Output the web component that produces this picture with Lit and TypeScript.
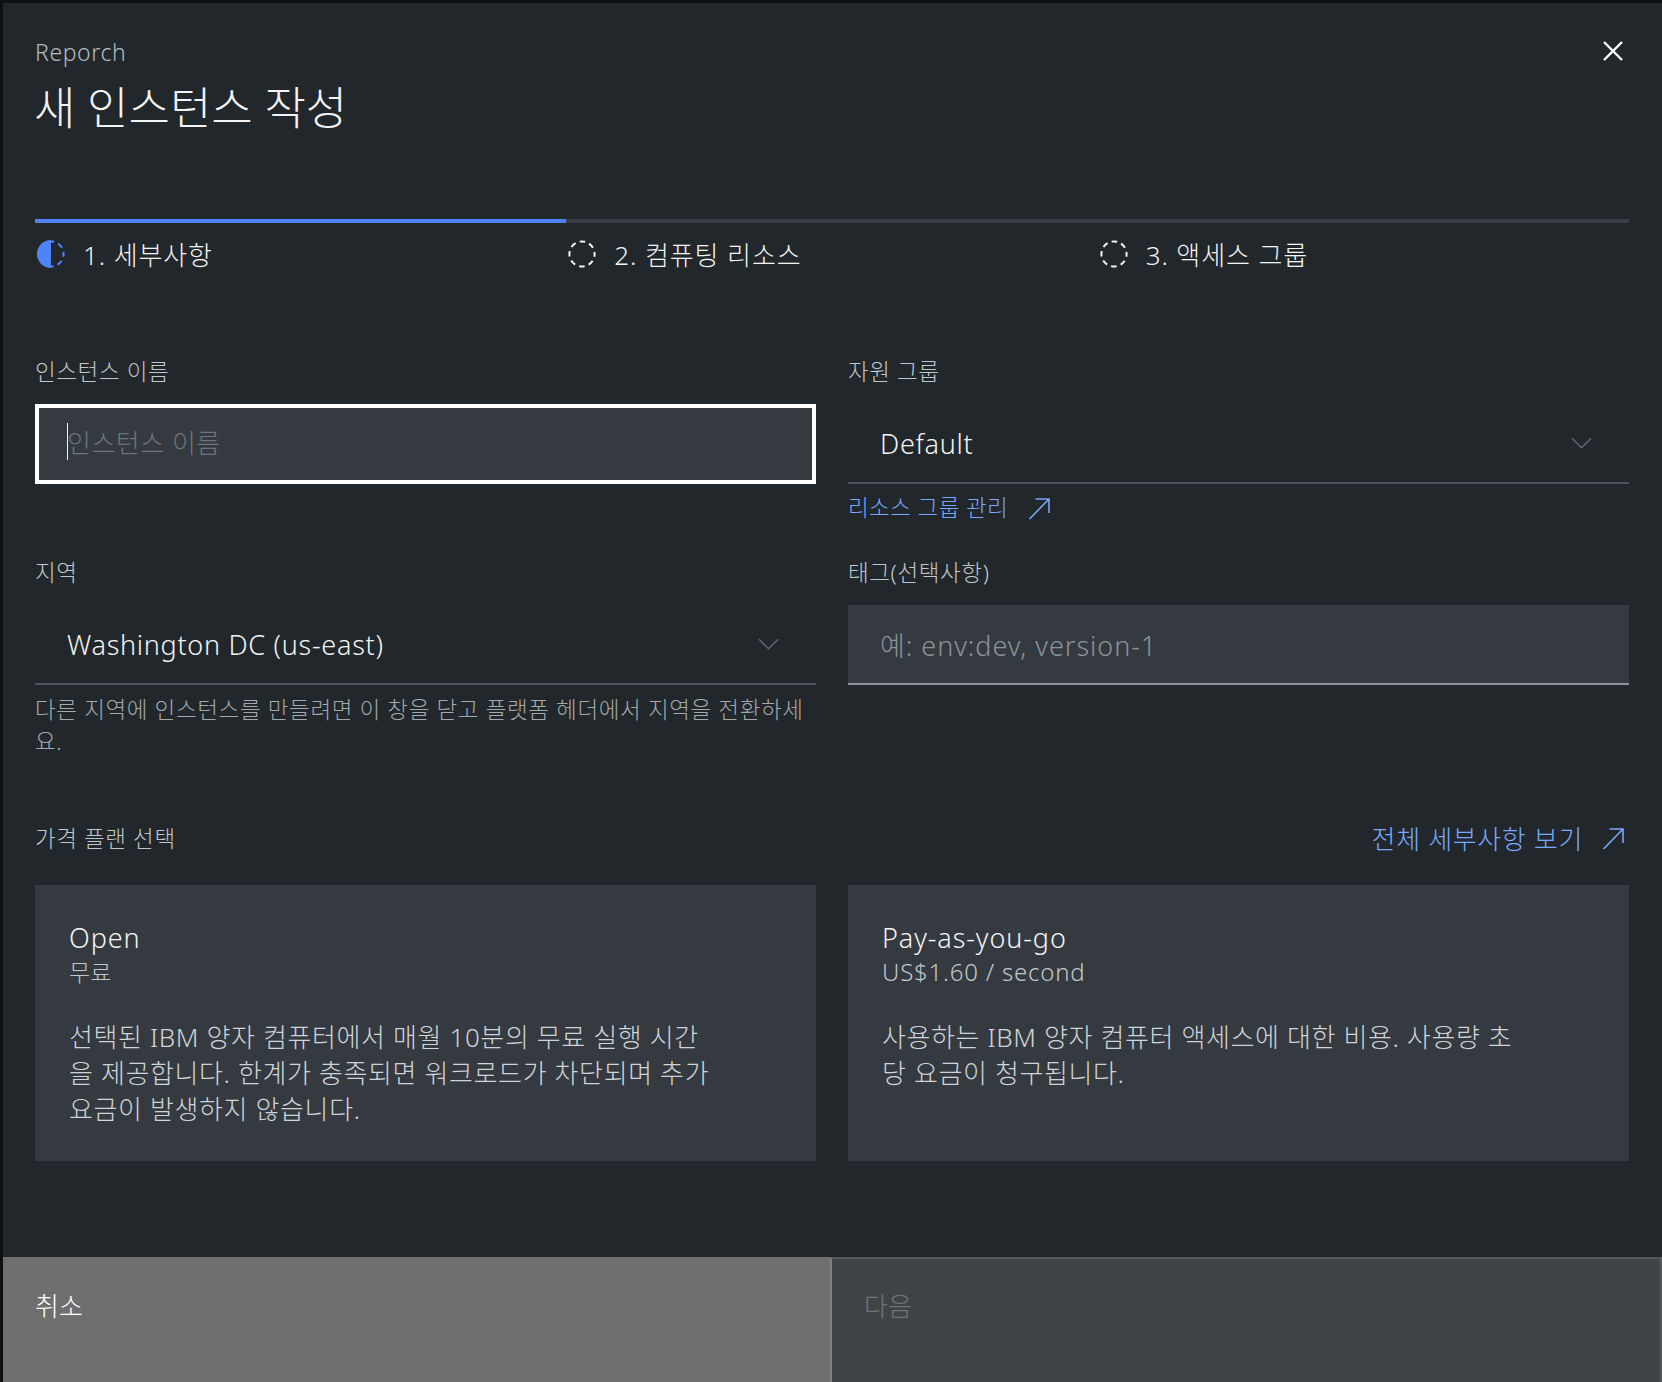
import { LitElement, html, css, svg } from 'lit';
import { customElement } from 'lit/decorators.js';

const launch = html`<svg class="launch" viewBox="0 0 24 24" fill="none" stroke="currentColor" stroke-width="1.6"><path d="M2.5 23 21.5 3.5M8.5 3h13.5v14"/></svg>`;
const chevron = html`<svg class="chev" viewBox="0 0 22 12" fill="none" stroke="currentColor" stroke-width="1.5"><path d="M1 1l10 10L21 1"/></svg>`;
const dashed = svg`<circle cx="14" cy="14" r="12.6" fill="none" stroke="currentColor" stroke-width="2" stroke-dasharray="5.6 4.3" stroke-dashoffset="2.8"/>`;

@customElement('app-root')
export class AppRoot extends LitElement {
	static styles = css`
		:host {
			display: block;
			width: 1662px;
			height: 1382px;
			overflow: hidden;
			padding: 3px 0 0 3px;
			box-sizing: border-box;
			background: #0e1113;
			font-family: 'Noto Sans', 'Noto Sans CJK KR', sans-serif;
			color: #f4f4f4;
		}
		.modal {
			height: 1379px;
			background: #21272a;
			display: flex;
			flex-direction: column;
		}
		.body {
			flex: 1;
			padding: 0 33px 0 32px;
		}
		.head {
			display: flex;
			justify-content: space-between;
			height: 216px;
		}
		.eyebrow {
			font-size: 23px;
			line-height: 32px;
			margin-top: 33px;
			color: #b4bac0;
			font-weight: 300;
			letter-spacing: 0.6px;
		}
		h1 {
			margin: 10px 0 0 -1px;
			font-size: 45px;
			line-height: 60px;
			font-weight: 300;
			color: #f4f4f4;
		}
		.close {
			margin: 36px 4px 0 0;
			width: 24px;
			height: 24px;
			color: #fff;
		}
		.steps {
			display: grid;
			grid-template-columns: repeat(3, 1fr);
		}
		.step {
			border-top: 4px solid #393f44;
			display: flex;
			align-items: center;
			gap: 18px;
			height: 62px;
			margin-bottom: -2px;
			font-size: 26px;
			font-weight: 300;
			letter-spacing: 0.9px;
			padding-left: 2px;
		}
		.step.active {
			border-top-color: #5083f8;
		}
		.step svg {
			width: 28px;
			height: 28px;
			flex: none;
			color: #f4f4f4;
		}
		.step.active svg {
			color: #5083f8;
		}
		.form {
			margin-top: 72px;
			display: grid;
			grid-template-columns: 781px 781px;
			column-gap: 32px;
		}
		.cell {
			height: 201px;
		}
		.cell.tall {
			height: 265px;
		}
		.label {
			font-size: 22.5px;
			line-height: 32px;
			color: #c1c7cd;
			font-weight: 300;
			letter-spacing: 0.6px;
			padding-top: 1px;
			margin-bottom: 16px;
		}
		.input {
			position: relative;
			box-sizing: border-box;
			height: 80px;
			background: #343a3f;
			display: flex;
			align-items: center;
			padding: 0 28px;
			font-size: 26px;
			color: #8d9299;
			font-weight: 300;
		}
		.input.focus {
			border: 4px solid #fff;
			padding-bottom: 4px;
			color: #6f747a;
			letter-spacing: 0.5px;
		}
		.input.tags {
			border-bottom: 2px solid #8d9299;
			padding: 0 32px;
			font-size: 27px;
			letter-spacing: 0.95px;
		}
		.caret {
			position: absolute;
			left: 28px;
			top: 15px;
			width: 1px;
			height: 37px;
			background: #f4f4f4;
		}
		.select {
			box-sizing: border-box;
			height: 80px;
			border-bottom: 2px solid #4d5358;
			display: flex;
			align-items: center;
			justify-content: space-between;
			padding: 0 37px 0 32px;
			font-size: 27px;
			letter-spacing: 0.7px;
			font-weight: 300;
		}
		.chev {
			width: 21px;
			height: 12px;
			color: #62686e;
		}
		.help {
			margin-top: 9px;
			font-size: 22.5px;
			line-height: 32px;
			color: #a4a9ae;
			font-weight: 300;
			letter-spacing: 0.63px;
		}
		a {
			color: #78a9ff;
			text-decoration: none;
			display: flex;
			align-items: center;
			font-weight: 300;
		}
		.manage {
			margin-top: 8px;
			font-size: 22.5px;
			line-height: 32px;
			letter-spacing: 0.4px;
			gap: 19px;
		}
		.launch {
			width: 24px;
			height: 24px;
			flex: none;
		}
		.plan-head {
			box-sizing: border-box;
			display: flex;
			justify-content: space-between;
			align-items: center;
			height: 32px;
			padding-top: 2px;
			margin-bottom: 32px;
		}
		.plan-head .label {
			margin: 0;
		}
		.details {
			font-size: 26px;
			letter-spacing: 0.65px;
			gap: 18px;
			padding-right: 4px;
		}
		.plans {
			display: grid;
			grid-template-columns: 781px 781px;
			column-gap: 32px;
		}
		.plan {
			box-sizing: border-box;
			height: 276px;
			background: #343a3f;
			padding: 34px 34px 0;
			font-weight: 300;
		}
		.plan-name {
			font-size: 27px;
			line-height: 38px;
			letter-spacing: 0.9px;
		}
		.plan-price {
			margin-top: 1px;
			font-size: 23px;
			line-height: 28px;
			color: #c1c7cd;
		}
		.plan-price.latin {
			font-size: 24px;
			letter-spacing: 0.8px;
		}
		.plan-text {
			margin-top: 33px;
			font-size: 26px;
			line-height: 36px;
			letter-spacing: 0.62px;
			color: #d0d4d8;
			max-width: 645px;
		}
		.foot {
			display: grid;
			grid-template-columns: 827px 1fr;
			height: 125px;
			font-size: 26px;
			font-weight: 300;
		}
		.btn {
			box-sizing: border-box;
			line-height: 36px;
		}
		.cancel {
			padding: 31px 32px;
			background: #6f6f6f;
			color: #fff;
		}
		.next {
			padding: 29px 32px;
			background: #404447;
			color: #6f7376;
			border-left: 2px solid #808080;
			border-top: 2px solid #55595c;
			border-right: 2px solid #55595c;
		}
	`;

	render() {
		return html`
			<div class="modal">
				<div class="body">
					<div class="head">
						<div>
							<div class="eyebrow">Reporch</div>
							<h1>새 인스턴스 작성</h1>
						</div>
						<svg class="close" viewBox="0 0 24 24" fill="none" stroke="currentColor" stroke-width="2.4"><path d="M3 3l18 18M21 3L3 21"/></svg>
					</div>
					<div class="steps">
						<div class="step active">
							<svg viewBox="0 0 28 28">${dashed}<path d="M14 0a14 14 0 0 0 0 28z" fill="currentColor"/></svg>
							<span>1. 세부사항</span>
						</div>
						<div class="step"><svg viewBox="0 0 28 28">${dashed}</svg><span>2. 컴퓨팅 리소스</span></div>
						<div class="step"><svg viewBox="0 0 28 28">${dashed}</svg><span>3. 액세스 그룹</span></div>
					</div>
					<div class="form">
						<div class="cell">
							<div class="label">인스턴스 이름</div>
							<div class="input focus"><span class="caret"></span>인스턴스 이름</div>
						</div>
						<div class="cell">
							<div class="label">자원 그룹</div>
							<div class="select">Default ${chevron}</div>
							<a class="manage" href="#">리소스 그룹 관리 ${launch}</a>
						</div>
						<div class="cell tall">
							<div class="label">지역</div>
							<div class="select">Washington DC (us-east) ${chevron}</div>
							<div class="help">다른 지역에 인스턴스를 만들려면 이 창을 닫고 플랫폼 헤더에서 지역을 전환하세요.</div>
						</div>
						<div class="cell tall">
							<div class="label">태그(선택사항)</div>
							<div class="input tags">예: env:dev, version-1</div>
						</div>
					</div>
					<div class="plan-head">
						<div class="label">가격 플랜 선택</div>
						<a class="details" href="#">전체 세부사항 보기 ${launch}</a>
					</div>
					<div class="plans">
						<div class="plan">
							<div class="plan-name">Open</div>
							<div class="plan-price">무료</div>
							<div class="plan-text">선택된 IBM 양자 컴퓨터에서 매월 10분의 무료 실행 시간을 제공합니다. 한계가 충족되면 워크로드가 차단되며 추가 요금이 발생하지 않습니다.</div>
						</div>
						<div class="plan">
							<div class="plan-name">Pay-as-you-go</div>
							<div class="plan-price latin">US$1.60 / second</div>
							<div class="plan-text">사용하는 IBM 양자 컴퓨터 액세스에 대한 비용. 사용량 초당 요금이 청구됩니다.</div>
						</div>
					</div>
				</div>
				<div class="foot">
					<div class="btn cancel">취소</div>
					<div class="btn next">다음</div>
				</div>
			</div>
		`;
	}
}
